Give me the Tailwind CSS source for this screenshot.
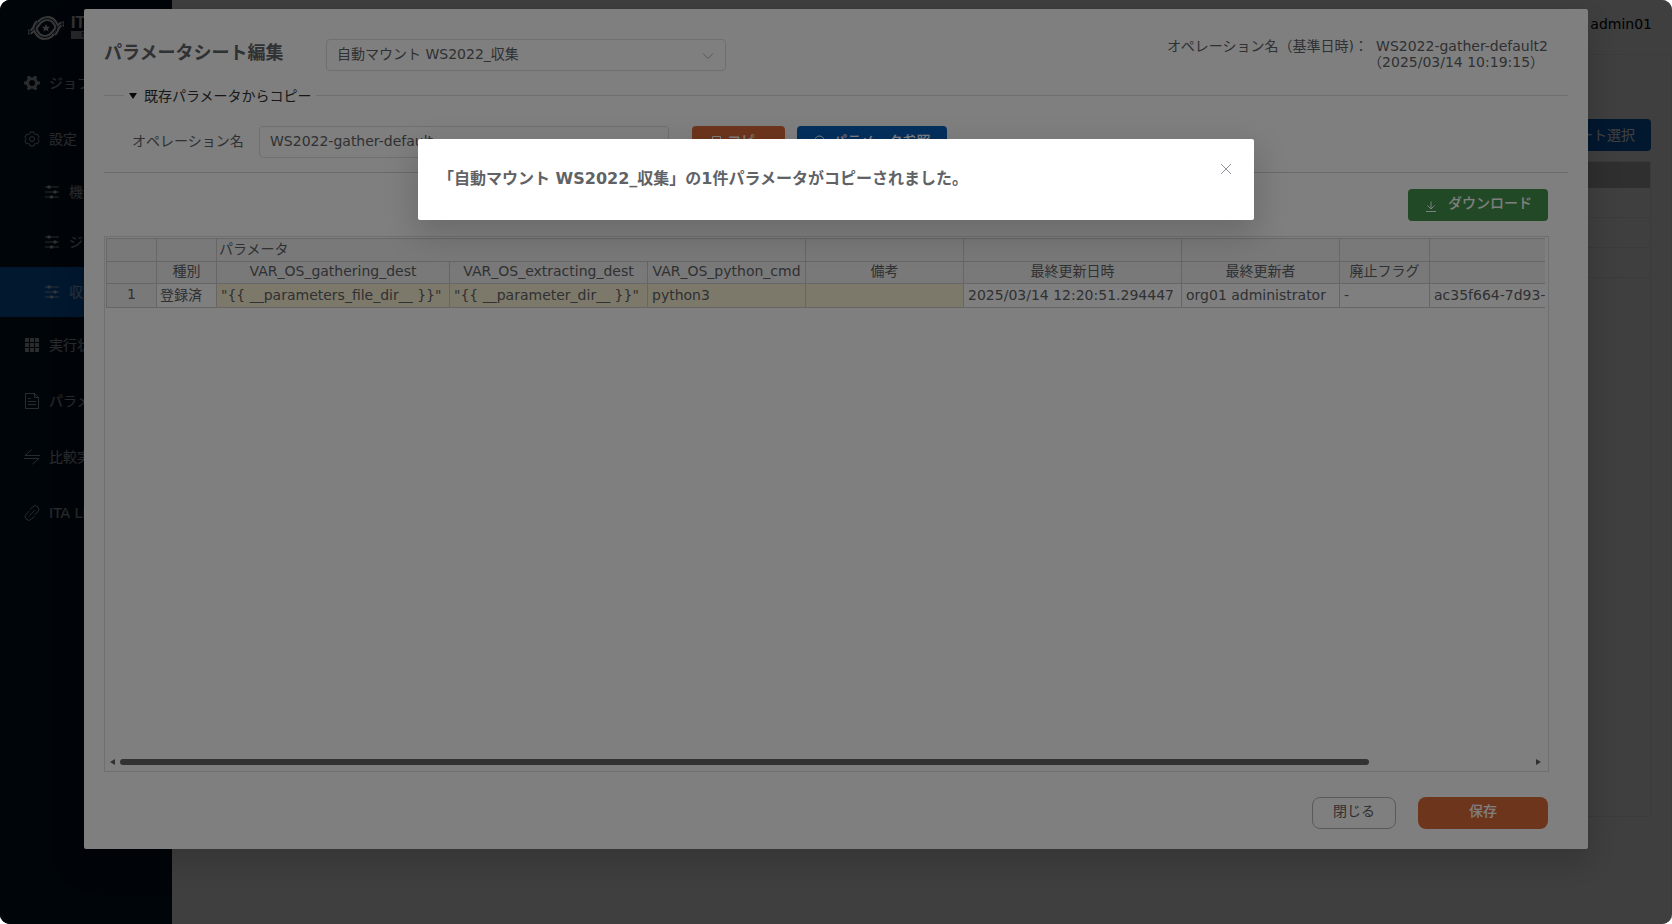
<!DOCTYPE html>
<html lang="ja">
<head>
<meta charset="utf-8">
<meta name="viewport" content="width=device-width, initial-scale=1">
<title>パラメータシート編集</title>
<script src="https://cdn.jsdelivr.net/npm/@tailwindcss/browser@4"></script>
</head>
<body class="bg-white font-['DejaVu_Sans','Noto_Sans_CJK_JP',sans-serif] text-sm leading-4 text-[#606266]">
<svg class="hidden" aria-hidden="true">
  <symbol id="sliders" viewBox="0 0 16 16"><path d="M1 3h14M1 8h14M1 13h14" stroke="currentColor" stroke-width="1.2" fill="none"/><circle cx="5" cy="3" r="1.8" fill="currentColor"/><circle cx="11" cy="8" r="1.8" fill="currentColor"/><circle cx="7.5" cy="13" r="1.8" fill="currentColor"/></symbol>
</svg>
<div class="relative h-screen overflow-hidden rounded-[10px] bg-black">

  <!-- Application shell -->
  <div class="absolute inset-0 flex">
    <aside class="w-43 shrink-0 bg-[#031525] text-white/65">
      <div class="flex h-[55px] items-center gap-[5px] pl-[26px]">
        <svg class="h-7 w-10 shrink-0" viewBox="0 0 40 28" fill="none">
          <g stroke="#dadcde" stroke-width="5">
            <path d="M2 18h2c2 0 4-3 8-8 5-7 13-7 17-1 3 4 2 8-1 11"/>
            <path d="M38 10h-2c-2 0-4 3-8 8-5 7-13 7-17 1-3-4-2-8 1-11"/>
          </g>
          <g stroke="#031525" stroke-width="1">
            <path d="M2 18h2c2 0 4-3 8-8 5-7 13-7 17-1 3 4 2 8-1 11"/>
            <path d="M38 10h-2c-2 0-4 3-8 8-5 7-13 7-17 1-3-4-2-8 1-11"/>
            <path d="M4 15v6M36 7v6"/>
          </g>
          <path d="M20 10l1.200 2.700 2.900.2-2.200 1.900.8 2.800-2.700-1.500-2.700 1.500.8-2.800-2.200-1.900 2.900-.2z" fill="#dadcde"/>
        </svg>
        <div class="w-24 whitespace-nowrap font-['Liberation_Sans',sans-serif] text-base leading-3 font-bold text-white/80">
          <div>IT Automation</div>
          <div class="mt-0.5 bg-white/60 pl-2.5 text-[8px] leading-2 text-[#031525]">SETTINGS</div>
        </div>
      </div>
      <nav class="whitespace-nowrap">
        <a href="#" class="flex h-14 items-center gap-[9px] pl-6">
          <svg class="size-4 shrink-0" viewBox="0 0 16 16" fill="none" stroke="currentColor"><circle cx="8" cy="8" r="4.500" stroke-width="3"/><path d="M5.200 3.200L4 1.200M10.800 3.200L12 1.200M2.500 8H0M13.500 8H16M5.200 12.800L4 14.800M10.800 12.800L12 14.800" stroke-width="3"/></svg>ジョブフロー</a>
        <a href="#" class="flex h-14 items-center gap-[9px] pl-6">
          <svg class="size-4 shrink-0" viewBox="0 0 16 16" fill="none" stroke="currentColor" stroke-linejoin="round"><path d="M6.200 1h3.600l.5 1.900 1.200.7 1.900-.5 1.800 3.100-1.400 1.300v1l1.400 1.300-1.800 3.100-1.900-.5-1.200.7-.5 1.900H6.200l-.5-1.900-1.200-.7-1.900.5L.8 9.800l1.400-1.300v-1L.8 6.200l1.800-3.100 1.900.5 1.200-.7z"/><circle cx="8" cy="8" r="2.500"/></svg>設定</a>
        <a href="#" class="flex h-[50px] items-center gap-[9px] pl-11"><svg class="size-4 shrink-0"><use href="#sliders"/></svg>機器一覧</a>
        <a href="#" class="flex h-[50px] items-center gap-[9px] pl-11"><svg class="size-4 shrink-0"><use href="#sliders"/></svg>ジョブ設定</a>
        <a href="#" aria-current="page" class="flex h-[50px] items-center gap-[9px] bg-[#0960bd] pl-11"><svg class="size-4 shrink-0"><use href="#sliders"/></svg>収集設定</a>
        <a href="#" class="flex h-14 items-center gap-[9px] pl-6">
          <svg class="size-4 shrink-0" viewBox="0 0 16 16" fill="currentColor"><path d="M1 1h4v4H1zM6 1h4v4H6zM11 1h4v4h-4zM1 6h4v4H1zM6 6h4v4H6zM11 6h4v4h-4zM1 11h4v4H1zM6 11h4v4H6zM11 11h4v4h-4z"/></svg>実行状況</a>
        <a href="#" class="flex h-14 items-center gap-[9px] pl-6">
          <svg class="size-4 shrink-0" viewBox="0 0 16 16" fill="none" stroke="currentColor"><path d="M1.500.5h9l4 4v11h-13zM10.500.5v4h4M4 5.500h3M4 8.500h8M4 11.500h8"/></svg>パラメータ</a>
        <a href="#" class="flex h-14 items-center gap-[9px] pl-6">
          <svg class="size-4 shrink-0" viewBox="0 0 16 16" fill="none" stroke="currentColor"><path d="M7.500.8L1 6.500h15M0 9.500h15L8.500 15.200"/></svg>比較実行</a>
        <a href="#" class="flex h-14 items-center gap-[9px] pl-6">
          <svg class="size-4 shrink-0" viewBox="0 0 16 16" fill="none" stroke="currentColor" stroke-linecap="round"><path d="M6 4.500l2.500-2.600a3.600 3.600 0 0 1 5.300 5L11 9.700M10 11.500l-2.500 2.600a3.600 3.600 0 0 1-5.300-5L5 6.300M5.500 10.500l5-5"/></svg>ITA Link</a>
      </nav>
    </aside>
    <div class="flex flex-1 flex-col bg-white">
      <header class="flex h-[54px] items-center justify-end pr-5 pb-1.5 text-black">admin01</header>
      <main class="flex flex-1 flex-col rounded-t border-t border-r border-[#f0f0f0] px-5 pt-16">
        <div class="flex justify-end"><button class="h-8 rounded bg-[#0960bd] px-4 text-white">シート選択</button></div>
        <div class="mt-[10px] mb-[107px] flex-1 border border-[#ededed]">
          <div class="h-[26px] bg-[#bdbdbd]"></div>
          <div class="h-[30px] border-b border-[#ededed]"></div>
          <div class="h-[30px] border-b border-[#ededed]"></div>
          <div class="h-[30px] border-b border-[#ededed]"></div>
        </div>
      </main>
    </div>
  </div>

  <!-- Edit dialog -->
  <div class="absolute inset-0 flex bg-black/50 px-21 pt-[9px] pb-[75px]">
    <section role="dialog" aria-labelledby="dlg-title" class="flex min-w-0 flex-1 flex-col rounded-xs bg-white pt-[30px] pb-5 pl-5 shadow-[0_12px_32px_4px_rgba(0,0,0,0.16)]">
      <div class="flex h-8 items-center pr-10">
        <h1 id="dlg-title" class="w-[222px] shrink-0 pb-1 text-lg leading-6 font-bold">パラメータシート編集</h1>
        <div class="relative w-[400px]">
          <select aria-label="パラメータシート" class="h-8 w-full appearance-none rounded border border-[#dcdfe6] bg-white pr-8 pb-0.5 pl-[10px] text-[#606266]"><option>自動マウント WS2022_収集</option></select>
          <svg class="pointer-events-none absolute top-[11px] right-3 size-3" viewBox="0 0 12 12" fill="none" stroke="#a8abb2"><path d="M1 3.500l5 5 5-5"/></svg>
        </div>
        <dl class="ml-auto flex whitespace-nowrap pb-[18px]">
          <dt>オペレーション名（基準日時)：</dt>
          <dd class="-mb-4 ml-2">WS2022-gather-default2<br><span class="-ml-2">（2025/03/14 10:19:15）</span></dd>
        </dl>
      </div>

      <details open class="mr-5 border-b border-[#d4d4d4]">
        <summary class="mt-4 flex h-[17px] cursor-pointer list-none items-center text-[#303133]">
          <span class="h-px w-5 bg-[#dcdcdc]"></span>
          <svg class="mr-[7px] ml-[5px] h-[6px] w-2" viewBox="0 0 8 6" fill="#111"><path d="M0 0h8L4 6z"/></svg>
          <span>既存パラメータからコピー</span>
          <span class="ml-1 h-px flex-1 bg-[#dcdcdc]"></span>
        </summary>
        <div class="mt-[22px] flex items-center pb-[14px] pl-7">
          <label for="op" class="w-[127px] pb-0.5">オペレーション名</label>
          <div class="relative w-[410px]">
            <select id="op" class="h-8 w-full appearance-none rounded border border-[#dcdfe6] bg-white pr-8 pb-0.5 pl-[10px] text-[#606266]"><option>WS2022-gather-default</option></select>
            <svg class="pointer-events-none absolute top-[11px] right-3 size-3" viewBox="0 0 12 12" fill="none" stroke="#a8abb2"><path d="M1 3.500l5 5 5-5"/></svg>
          </div>
          <button class="ml-[23px] flex h-8 items-center gap-[5px] rounded bg-[#dc6b3b] px-4 pb-0.5 font-medium text-white">
            <svg class="size-3.5" viewBox="0 0 14 14" fill="none" stroke="currentColor"><path d="M4.500 2.500h8v8h-8zM9 10.500v2H1.500v-7h3"/></svg>コピー</button>
          <button class="ml-3 flex h-8 items-center gap-1.5 rounded bg-[#0960bd] px-4 pb-0.5 font-medium text-white">
            <svg class="size-3.5" viewBox="0 0 14 14" fill="none" stroke="currentColor"><circle cx="6.500" cy="6.500" r="4.500"/><path d="M9.800 9.800l3 3"/></svg>パラメータ参照</button>
        </div>
      </details>

      <div class="mt-4 mr-10 flex justify-end">
        <button class="flex h-8 items-center gap-2.5 rounded bg-[#43934a] px-4 font-medium text-white">
          <svg class="mt-0.5 size-3.5" viewBox="0 0 14 14" fill="none" stroke="currentColor"><path d="M2 12.500h10M7 2.500v7.500M3.500 6.500L7 10l3.500-3.500"/></svg><span class="pb-1">ダウンロード</span></button>
      </div>

      <div class="mt-[15px] mr-[39px] flex flex-1 flex-col border border-[#dcdfe6] p-px">
        <div class="min-h-0 flex-1 overflow-hidden pr-0.5">
          <div class="overflow-hidden">
          <table class="w-[1720px] table-fixed border-collapse whitespace-nowrap [&_td]:border [&_td]:border-[#cdcdcd] [&_td]:p-0 [&_td]:pb-0.5 [&_th]:border [&_th]:border-[#cdcdcd] [&_th]:bg-[#f3f3f3] [&_th]:p-0 [&_th]:pb-[3px] [&_th]:font-normal">
            <colgroup><col class="w-[50px]"><col class="w-[60px]"><col class="w-[233px]"><col class="w-[198px]"><col class="w-[158px]"><col class="w-[158px]"><col class="w-[218px]"><col class="w-[158px]"><col class="w-[90px]"><col></colgroup>
            <thead>
              <tr class="h-[23px]"><th></th><th></th><th colspan="3" class="text-left"><span class="pl-0.5">パラメータ</span></th><th></th><th></th><th></th><th></th><th></th></tr>
              <tr class="h-[22px]"><th></th><th>種別</th><th>VAR_OS_gathering_dest</th><th>VAR_OS_extracting_dest</th><th>VAR_OS_python_cmd</th><th>備考</th><th>最終更新日時</th><th>最終更新者</th><th>廃止フラグ</th><th></th></tr>
            </thead>
            <tbody>
              <tr class="h-6"><th scope="row">1</th><td><span class="pl-[3px]">登録済</span></td><td class="bg-[#faf2d4]"><span class="pl-1">"{{ __parameters_file_dir__ }}"</span></td><td class="bg-[#faf2d4]"><span class="pl-1">"{{ __parameter_dir__ }}"</span></td><td class="bg-[#faf2d4]"><span class="pl-1">python3</span></td><td class="bg-[#faf2d4]"></td><td><span class="pl-1">2025/03/14 12:20:51.294447</span></td><td><span class="pl-1">org01 administrator</span></td><td><span class="pl-1">-</span></td><td><span class="pl-1">ac35f664-7d93-4b1e-a2c8</span></td></tr>
            </tbody>
          </table>
          </div>
        </div>
        <div class="flex h-4 items-center gap-[5px] pr-[6px] pl-1">
          <svg class="h-[6px] w-[5px]" viewBox="0 0 5 6" fill="#606060"><path d="M5 0v6L0 3z"/></svg>
          <div class="flex-1"><div class="h-[6px] w-[88.5%] rounded-full bg-[#666]"></div></div>
          <svg class="h-[6px] w-[5px]" viewBox="0 0 5 6" fill="#606060"><path d="M0 0v6l5-3z"/></svg>
        </div>
      </div>

      <div class="mt-[25px] mr-10 flex justify-end gap-[22px]">
        <button class="h-8 w-[84px] rounded-lg border border-[#b4b4b4] pb-1">閉じる</button>
        <button class="h-8 w-[130px] rounded-lg bg-[#dc6b3b] pb-1 font-medium text-white">保存</button>
      </div>
    </section>
  </div>

  <!-- Completion message -->
  <div class="absolute inset-0 flex items-start justify-center bg-black/50 pt-[139px]">
    <div role="alertdialog" aria-labelledby="msg" class="flex min-h-[81px] w-1/2 items-start justify-between rounded-xs bg-white pt-5 pr-5 pl-5 shadow-[0_12px_32px_4px_rgba(0,0,0,0.16)]">
      <p id="msg" class="pt-2 text-base leading-6 font-bold">「自動マウント WS2022_収集」の1件パラメータがコピーされました。</p>
      <button aria-label="閉じる" class="mt-0.5 grid size-4 place-items-center"><svg class="size-3" viewBox="0 0 12 12" fill="none" stroke="#909399"><path d="M1 1l10 10M11 1L1 11"/></svg></button>
    </div>
  </div>
</div>
</body>
</html>
